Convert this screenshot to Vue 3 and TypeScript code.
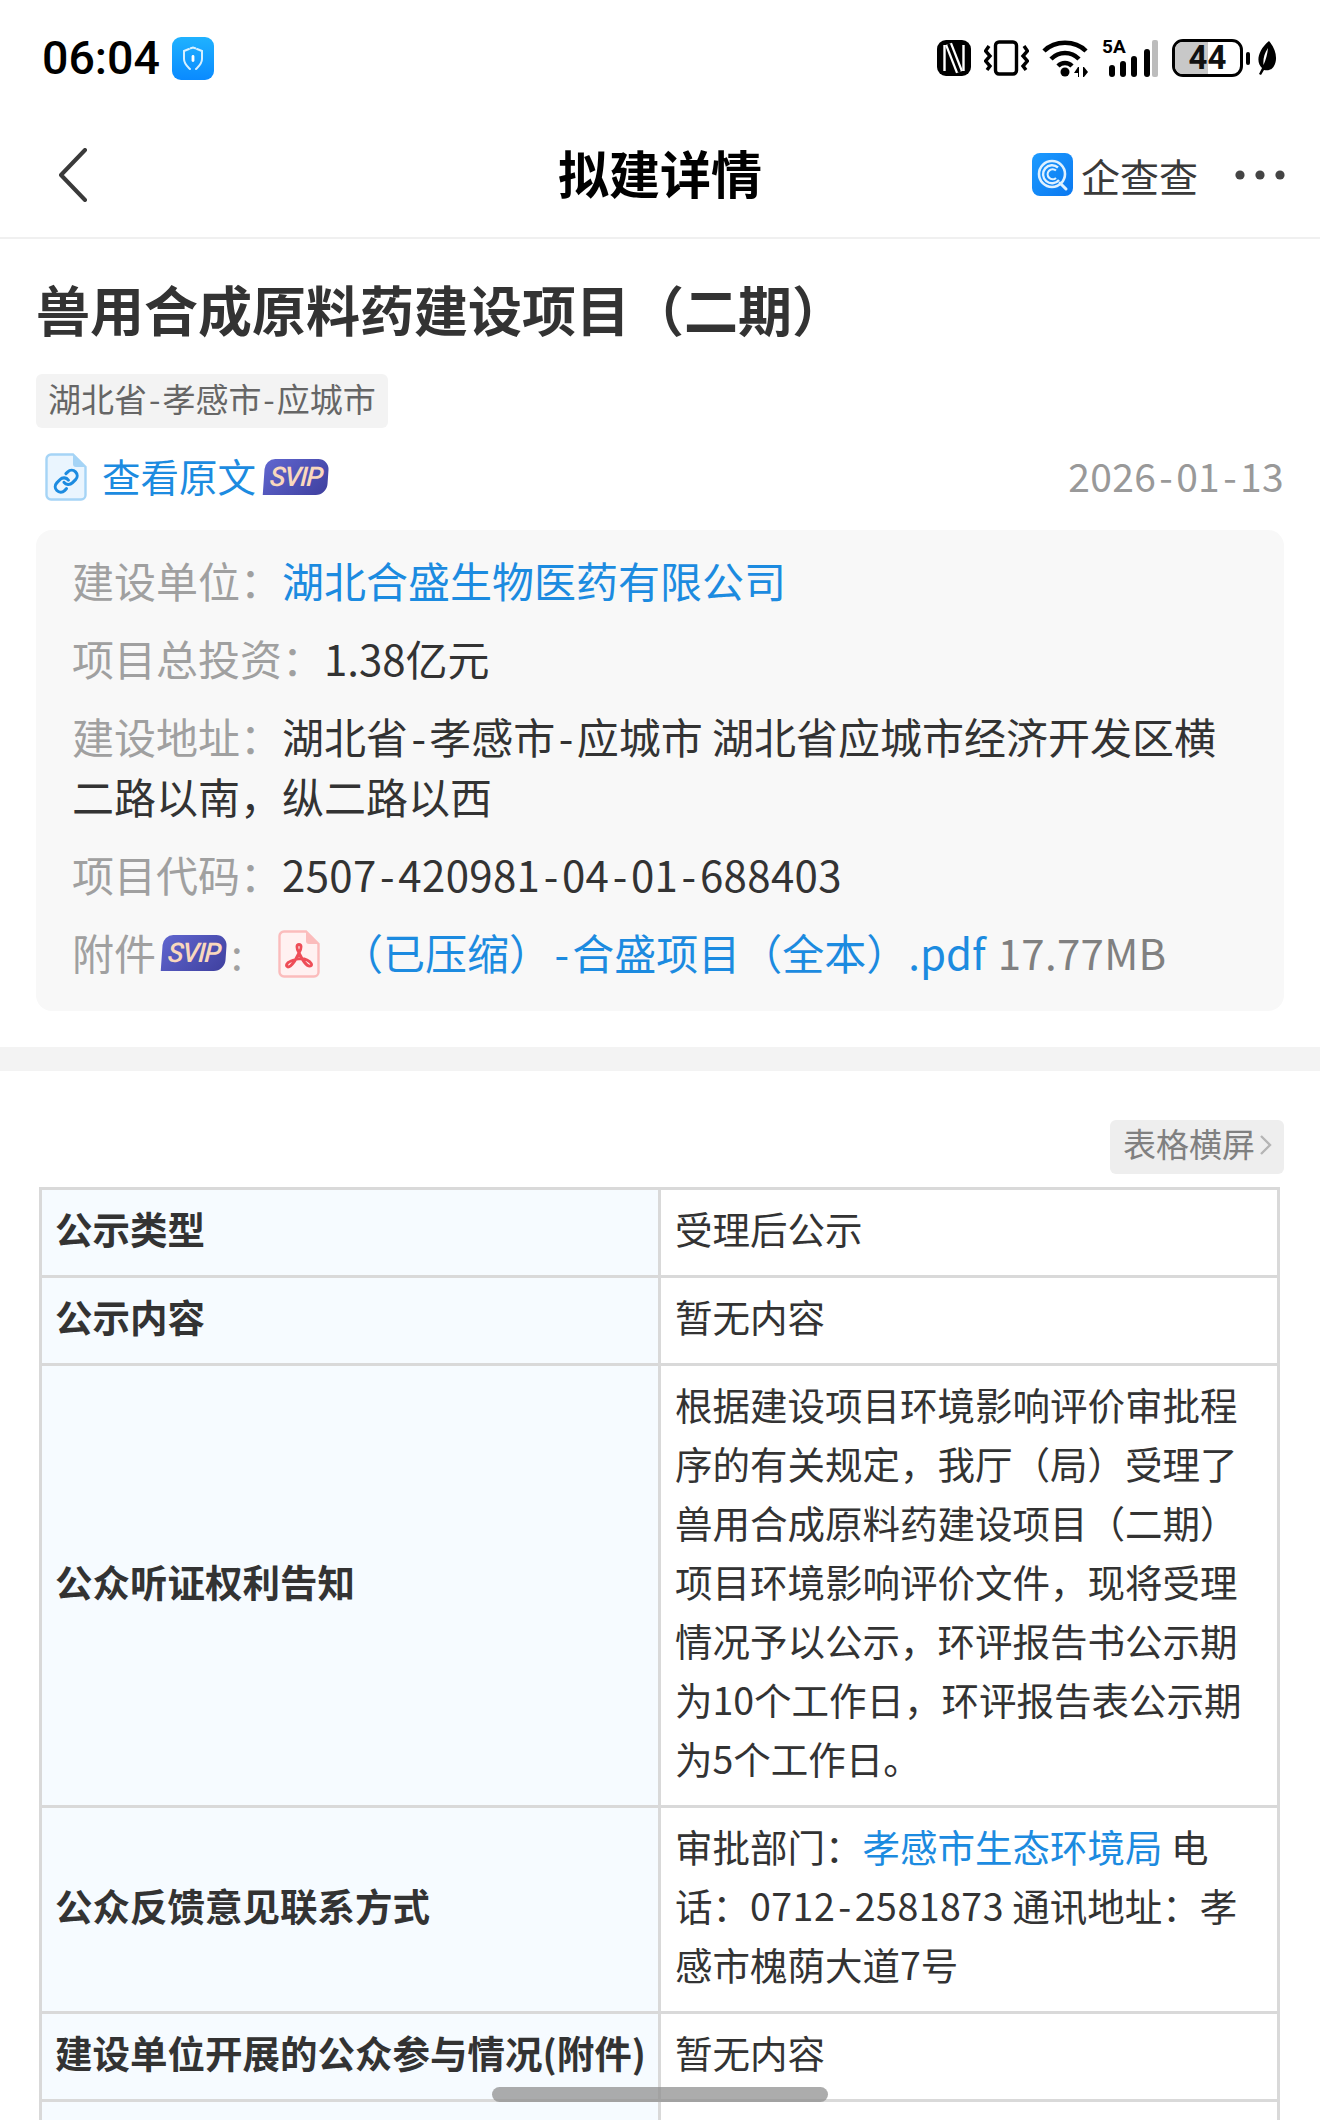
<script setup lang="ts">
const projectName = '兽用合成原料药建设项目（二期）'
const noContent = '暂无内容'
</script>

<template>
  <div class="page">
    <header class="status">
      <div class="status-left">
        <span class="time">06:04</span>
        <svg class="shield" width="42" height="43" viewBox="0 0 42 43">
          <defs>
            <linearGradient id="sg" x1="0" y1="0" x2="0" y2="1">
              <stop offset="0" stop-color="#1fb2ff" />
              <stop offset="1" stop-color="#0a8aff" />
            </linearGradient>
          </defs>
          <rect width="42" height="43" rx="9" fill="url(#sg)" />
          <path d="M17 12 L12 14 V22 C12 27 16 30 18 32 M25 12 L30 14 V22 C30 27 26 30 24 32" fill="none" stroke="#d8f0ff" stroke-width="2" stroke-linecap="round" />
          <path d="M18 11.5 L21 10.5 L24 11.5" fill="none" stroke="#d8f0ff" stroke-width="2" />
          <rect x="19.6" y="18" width="2.8" height="7" rx="1.4" fill="#fff" />
        </svg>
      </div>
      <div class="status-right">
        <svg width="34" height="36" viewBox="0 0 34 36">
          <rect width="34" height="36" rx="9" fill="#000" />
          <path d="M7.5 5 V31 M26.5 5 V31" stroke="#fff" stroke-width="2.4" />
          <path d="M11.5 4 L22.5 32" stroke="#fff" stroke-width="7.5" />
          <path d="M11.5 4 L22.5 32" stroke="#000" stroke-width="3" />
        </svg>
        <svg class="vib" width="45" height="36" viewBox="0 0 45 36">
          <rect x="11.5" y="2" width="21" height="32" rx="3.5" fill="none" stroke="#000" stroke-width="3.4" />
          <path d="M5 6 L1.5 11 L6 16 L1.5 21 L6 26 L3 30" fill="none" stroke="#000" stroke-width="3.4" />
          <path d="M40 6 L43.5 11 L39 16 L43.5 21 L39 26 L42 30" fill="none" stroke="#000" stroke-width="3.4" />
        </svg>
        <svg class="wifi" width="48" height="38" viewBox="0 0 48 38">
          <path d="M2 12 C13 1 33 1 44 12" fill="none" stroke="#000" stroke-width="4.5" />
          <path d="M9 20 C17 12 29 12 37 20" fill="none" stroke="#000" stroke-width="4.5" />
          <path d="M16 27 C20 23 26 23 30 27" fill="none" stroke="#000" stroke-width="4.5" />
          <circle cx="23" cy="33" r="4.5" fill="#000" />
          <path d="M36 28 L32 34 H36 Z M36 28 V38 H37 V28 Z M41 28 V38 H42 L46 33 L42 28 Z" fill="#000" />
        </svg>
        <div class="signal">
          <span class="five-a">5A</span>
          <svg width="56" height="38" viewBox="0 0 56 38">
            <rect x="7" y="26" width="6" height="12" rx="3" fill="#000" />
            <rect x="18" y="22" width="6" height="16" rx="3" fill="#000" />
            <rect x="29" y="17" width="6" height="21" rx="3" fill="#000" />
            <rect x="42" y="10" width="6" height="28" rx="3" fill="#000" />
            <rect x="50" y="1" width="6" height="37" rx="2" fill="#bcbcbc" />
          </svg>
        </div>
        <div class="battery">
          <div class="battery-body">
            <span class="battery-fill"></span>
            <span class="battery-num">44</span>
          </div>
          <span class="battery-nub"></span>
        </div>
        <svg class="leaf" width="22" height="34" viewBox="0 0 22 34">
          <path d="M14 0 C21 8 23 18 19 25 C17 29 13 30 9 29 L6 34 L4 33 L7 27 C1 22 2 10 14 0 Z M13 7 C9 13 8 18 8.5 24 C11 18 12.5 13 13 7 Z" fill="#000" fill-rule="evenodd" />
        </svg>
      </div>
    </header>

    <nav class="nav">
      <div class="nav-left">
        <svg width="30" height="54" viewBox="0 0 30 54">
          <path d="M27 2 L3 27 L27 52" fill="none" stroke="#3a3a3a" stroke-width="4" stroke-linecap="round" stroke-linejoin="round" />
        </svg>
      </div>
      <h2 class="nav-title">拟建详情</h2>
      <div class="nav-right">
        <svg width="41" height="43" viewBox="0 0 41 43">
          <defs>
            <linearGradient id="qg" x1="0" y1="0" x2="1" y2="1">
              <stop offset="0" stop-color="#1d9bff" />
              <stop offset="1" stop-color="#0a78f0" />
            </linearGradient>
          </defs>
          <rect width="41" height="43" rx="8" fill="url(#qg)" />
          <circle cx="20" cy="21" r="13" fill="none" stroke="#dff1ff" stroke-width="2.6" />
          <path d="M26 14.5 A9 9 0 1 0 27 27" fill="none" stroke="#dff1ff" stroke-width="2.4" />
          <path d="M24 17.5 A5 5 0 1 0 24 25" fill="none" stroke="#dff1ff" stroke-width="2.2" />
          <path d="M28 30 L34 36" stroke="#dff1ff" stroke-width="3" stroke-linecap="round" />
        </svg>
        <span class="brand">企查查</span>
        <svg class="dots" width="50" height="10" viewBox="0 0 50 10">
          <circle cx="5" cy="5" r="4.6" fill="#444" />
          <circle cx="25" cy="5" r="4.6" fill="#444" />
          <circle cx="45" cy="5" r="4.6" fill="#444" />
        </svg>
      </div>
    </nav>

    <section class="summary">
      <h1 class="name">{{ projectName }}</h1>
      <span class="region">湖北省<span class="hy">-</span>孝感市<span class="hy">-</span>应城市</span>
      <div class="source">
        <div class="source-link">
          <svg width="42" height="48" viewBox="0 0 42 48">
            <path d="M6 1.5 H28 L40.5 14 V42 A4.5 4.5 0 0 1 36 46.5 H6 A4.5 4.5 0 0 1 1.5 42 V6 A4.5 4.5 0 0 1 6 1.5 Z" fill="#eaf5fe" stroke="#a5d4f6" stroke-width="2.4" />
            <path d="M28 1.5 L40.5 14 H31 A3 3 0 0 1 28 11 Z" fill="#a5d4f6" />
            <g transform="translate(8 15) scale(1.1)" fill="none" stroke="#1c8be0" stroke-width="2.8" stroke-linecap="round">
              <path d="M10 13a5 5 0 0 0 7.54.54l3-3a5 5 0 0 0-7.07-7.07l-1.72 1.71" />
              <path d="M14 11a5 5 0 0 0-7.54-.54l-3 3a5 5 0 0 0 7.07 7.07l1.71-1.71" />
            </g>
          </svg>
          <span class="source-text">查看原文</span>
          <span class="svip">SVIP</span>
        </div>
        <span class="date">2026<span class="hy">-</span>01<span class="hy">-</span>13</span>
      </div>

      <div class="facts">
        <p class="fact"><span class="label">建设单位：</span><a class="link">湖北合盛生物医药有限公司</a></p>
        <p class="fact"><span class="label">项目总投资：</span>1.38亿元</p>
        <p class="fact"><span class="label">建设地址：</span>湖北省<span class="hy">-</span>孝感市<span class="hy">-</span>应城市 湖北省应城市经济开发区横二路以南，纵二路以西</p>
        <p class="fact"><span class="label">项目代码：</span><span class="code">2507<span class="hy">-</span>420981<span class="hy">-</span>04<span class="hy">-</span>01<span class="hy">-</span>688403</span></p>
        <div class="fact attach">
          <span class="label">附件</span>
          <span class="svip svip-inline">SVIP</span>
          <span class="label colon">:</span>
          <svg class="pdf" width="42" height="48" viewBox="0 0 42 48">
            <path d="M6 1.5 H28 L40.5 14 V42 A4.5 4.5 0 0 1 36 46.5 H6 A4.5 4.5 0 0 1 1.5 42 V6 A4.5 4.5 0 0 1 6 1.5 Z" fill="#fff1f1" stroke="#fbbcbc" stroke-width="2.4" />
            <path d="M28 1.5 L40.5 14 H31 A3 3 0 0 1 28 11 Z" fill="#fbbcbc" />
            <path d="M21 23 C18 18 18.5 14.5 21 14.5 C23.5 14.5 24 18 21 23 C18 29 14 37 10 37 C7.5 36 8 33 13 31 C18 29 25 28 29 30 C33 32 35 35 32.5 36 C28 37 24 29 21 23 Z" fill="none" stroke="#ee4d57" stroke-width="2.8" />
          </svg>
          <a class="link file">（已压缩）<span class="hy">-</span>合盛项目（全本）.pdf</a>
          <span class="size">17.77MB</span>
        </div>
      </div>
    </section>

    <div class="band"></div>

    <section class="detail">
      <div class="table-tools">
        <span class="rotate">表格横屏<svg width="13" height="22" viewBox="0 0 13 22"><path d="M2 2 L11 11 L2 20" fill="none" stroke="#b5b5b5" stroke-width="2.4" /></svg></span>
      </div>
      <table class="info">
        <tbody>
          <tr>
            <td class="key">公示类型</td>
            <td>受理后公示</td>
          </tr>
          <tr>
            <td class="key">公示内容</td>
            <td>{{ noContent }}</td>
          </tr>
          <tr>
            <td class="key">公众听证权利告知</td>
            <td>根据建设项目环境影响评价审批程序的有关规定，我厅（局）受理了{{ projectName }}项目环境影响评价文件，现将受理情况予以公示，环评报告书公示期为10个工作日，环评报告表公示期为5个工作日。</td>
          </tr>
          <tr>
            <td class="key">公众反馈意见联系方式</td>
            <td>审批部门：<a class="link">孝感市生态环境局</a> 电话：<span class="phone">0712<span class="hy">-</span>2581873</span> 通讯地址：孝感市槐荫大道7号</td>
          </tr>
          <tr>
            <td class="key">建设单位开展的公众参与情况(附件)</td>
            <td>{{ noContent }}</td>
          </tr>
          <tr>
            <td class="key">&nbsp;</td>
            <td>&nbsp;</td>
          </tr>
        </tbody>
      </table>
      <div class="scrollbar"></div>
    </section>
  </div>
</template>

<style>
html,
body {
  margin: 0;
  background: #fff;
}
</style>

<style scoped>
.page {
  position: relative;
  width: 1320px;
  height: 2120px;
  overflow: hidden;
  background: #fff;
  color: #333;
  font-family: "Noto Sans CJK SC", "Noto Sans", sans-serif;
}

.status {
  height: 116px;
  box-sizing: border-box;
  padding: 0 43px 0 42px;
  display: flex;
  align-items: center;
  justify-content: space-between;
}

.status-left {
  display: flex;
  align-items: center;
  gap: 12px;
}

.time {
  font-family: Roboto, sans-serif;
  font-weight: 500;
  font-size: 46.5px;
  color: #000;
}

.status-right {
  display: flex;
  align-items: center;
}

.vib {
  margin-left: 13px;
}

.wifi {
  margin-left: 13px;
}

.signal {
  position: relative;
  margin-left: 12px;
  width: 56px;
  height: 38px;
}

.five-a {
  position: absolute;
  left: 0;
  top: -3px;
  font-family: Roboto, sans-serif;
  font-weight: 700;
  font-size: 19px;
  line-height: 22px;
  color: #000;
}

.battery {
  display: flex;
  align-items: center;
  margin-left: 14px;
}

.battery-body {
  position: relative;
  width: 71px;
  height: 38px;
  box-sizing: border-box;
  border: 3px solid #000;
  border-radius: 11px;
  overflow: hidden;
  display: flex;
  align-items: center;
  justify-content: center;
}

.battery-fill {
  position: absolute;
  left: 0;
  top: 0;
  bottom: 0;
  width: 51%;
  background: #c8c8c8;
}

.battery-num {
  position: relative;
  font-family: Roboto, sans-serif;
  font-weight: 700;
  font-size: 33px;
  line-height: 32px;
  color: #111;
}

.battery-nub {
  width: 4px;
  height: 13px;
  margin-left: 3px;
  border-radius: 2px;
  background: #000;
}

.leaf {
  margin-left: 5px;
}

.nav {
  height: 123px;
  box-sizing: border-box;
  padding: 0 35px 4px;
  display: grid;
  grid-template-columns: 1fr auto 1fr;
  align-items: center;
  border-bottom: 2px solid #f0f0f0;
}

.nav-left {
  display: flex;
  align-items: center;
  padding-left: 23px;
}

.nav-title {
  margin: 0 0 6px;
  font-size: 51px;
  line-height: 70px;
  font-weight: 700;
  color: #000;
}

.nav-right {
  display: flex;
  align-items: center;
  justify-content: flex-end;
}

.brand {
  margin-left: 8px;
  font-size: 39px;
  line-height: 50px;
  color: #3a3a3a;
}

.dots {
  margin-left: 37px;
}

.summary {
  padding: 34px 36px 36px;
}

.name {
  margin: 0;
  font-size: 54px;
  line-height: 72px;
  font-weight: 700;
  color: #333;
}

.region {
  display: inline-block;
  margin-top: 29px;
  height: 54px;
  box-sizing: border-box;
  padding: 0 12px;
  border-radius: 6px;
  background: #f3f3f3;
  color: #666;
  font-size: 33px;
  line-height: 49px;
}

.region .hy {
  padding: 0 0.06em;
}

.hy {
  padding: 0 0.08em;
}

.source {
  height: 60px;
  margin-top: 19px;
  padding-left: 9px;
  display: flex;
  align-items: center;
  justify-content: space-between;
}

.source-link {
  display: flex;
  align-items: center;
}

.source-text {
  margin: 0 0 5px 15px;
  color: #1c8be0;
  font-size: 38.5px;
  line-height: 50px;
}

.svip {
  display: inline-block;
  margin-left: 8px;
  width: 64px;
  height: 36px;
  box-sizing: border-box;
  border-radius: 10px 11px 11px 0;
  background: linear-gradient(135deg, #6066cf, #3f409f);
  color: #f9d8bd;
  font-family: Roboto, sans-serif;
  font-style: italic;
  font-weight: 500;
  font-size: 27px;
  line-height: 36px;
  text-align: center;
  letter-spacing: -1.2px;
  transform: skewX(-4deg);
}

.date {
  margin-bottom: 5px;
  color: #999;
  font-size: 39px;
  line-height: 50px;
  letter-spacing: 0.3px;
}

.facts {
  margin-top: 23px;
  height: 481px;
  box-sizing: border-box;
  padding: 20px 36px 0;
  border-radius: 16px;
  background: #f8f8f8;
  font-size: 42px;
  line-height: 60px;
}

.fact {
  margin: 0 0 18px;
}

.label {
  color: #a0a0a0;
}

.link {
  color: #1c8be0;
}

.code {
  letter-spacing: 0.35px;
}

.attach {
  display: flex;
  align-items: center;
}

.svip-inline {
  margin-left: 6px;
  margin-top: 2px;
}

.colon {
  margin-left: 5px;
  width: 47px;
}

.pdf {
  margin-top: 4px;
}

.file {
  margin-left: 21px;
}

.size {
  margin-left: 12px;
  color: #808080;
  letter-spacing: 0.3px;
}

.band {
  height: 24px;
  background: #f3f3f3;
}

.detail {
  padding: 49px 36px 0;
}

.table-tools {
  display: flex;
  justify-content: flex-end;
}

.rotate {
  display: flex;
  align-items: center;
  height: 54px;
  box-sizing: border-box;
  padding: 0 12px 8px 13px;
  border-radius: 6px;
  background: #eee;
  color: #808080;
  font-size: 33px;
}

.rotate svg {
  margin-left: 4px;
  margin-top: 4px;
}

.info {
  width: 1241px;
  margin: 13px 0 0 3px;
  table-layout: fixed;
  border-collapse: collapse;
  font-size: 37.5px;
  line-height: 59px;
}

.info td {
  padding: 8px 34px 18px 14px;
  border: 3px solid #d9d9d9;
  color: #333;
  vertical-align: middle;
}

.info td.key {
  padding-left: 13px;
  padding-right: 0;
  background: #f6fbff;
  font-weight: 700;
}

.phone {
  letter-spacing: 0.5px;
}

.scrollbar {
  position: absolute;
  left: 492px;
  top: 2087px;
  width: 336px;
  height: 15px;
  border-radius: 8px;
  background: rgba(140, 140, 140, 0.72);
}
</style>
